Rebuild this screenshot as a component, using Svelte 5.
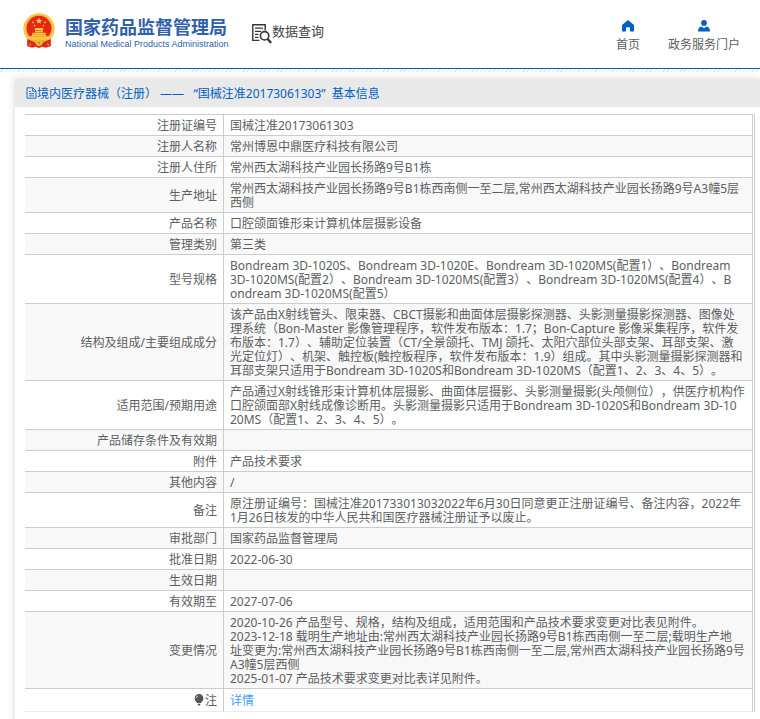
<script>
  const title = '境内医疗器械（注册） —— \u00a0\u00a0“国械注准20173061303” \u00a0基本信息';

  const rows = [
    { label: '注册证编号', lines: ['国械注准20173061303'] },
    { label: '注册人名称', lines: ['常州博恩中鼎医疗科技有限公司'] },
    { label: '注册人住所', lines: ['常州西太湖科技产业园长扬路9号B1栋'] },
    { label: '生产地址', lines: ['常州西太湖科技产业园长扬路9号B1栋西南侧一至二层,常州西太湖科技产业园长扬路9号A3幢5层', '西侧'] },
    { label: '产品名称', lines: ['口腔颌面锥形束计算机体层摄影设备'] },
    { label: '管理类别', lines: ['第三类'] },
    {
      label: '型号规格',
      lines: [
        'Bondream 3D-1020S、Bondream 3D-1020E、Bondream 3D-1020MS(配置1）、Bondream',
        '3D-1020MS(配置2）、Bondream 3D-1020MS(配置3）、Bondream 3D-1020MS(配置4）、B',
        'ondream 3D-1020MS(配置5）'
      ]
    },
    {
      label: '结构及组成/主要组成成分',
      lines: [
        '该产品由X射线管头、限束器、CBCT摄影和曲面体层摄影探测器、头影测量摄影探测器、图像处',
        '理系统（Bon-Master 影像管理程序，软件发布版本：1.7；Bon-Capture 影像采集程序，软件发',
        '布版本：1.7）、辅助定位装置（CT/全景颌托、TMJ 颌托、太阳穴部位头部支架、耳部支架、激',
        '光定位灯）、机架、触控板(触控板程序，软件发布版本：1.9）组成。其中头影测量摄影探测器和',
        '耳部支架只适用于Bondream 3D-1020S和Bondream 3D-1020MS（配置1、2、3、4、5）。'
      ]
    },
    {
      label: '适用范围/预期用途',
      lines: [
        '产品通过X射线锥形束计算机体层摄影、曲面体层摄影、头影测量摄影(头颅侧位），供医疗机构作',
        '口腔颌面部X射线成像诊断用。头影测量摄影只适用于Bondream 3D-1020S和Bondream 3D-10',
        '20MS（配置1、2、3、4、5）。'
      ]
    },
    { label: '产品储存条件及有效期', lines: [''] },
    { label: '附件', lines: ['产品技术要求'] },
    { label: '其他内容', lines: ['/'] },
    {
      label: '备注',
      lines: [
        '原注册证编号：国械注准201733013032022年6月30日同意更正注册证编号、备注内容，2022年',
        '1月26日核发的中华人民共和国医疗器械注册证予以废止。'
      ]
    },
    { label: '审批部门', lines: ['国家药品监督管理局'] },
    { label: '批准日期', lines: ['2022-06-30'] },
    { label: '生效日期', lines: [''] },
    { label: '有效期至', lines: ['2027-07-06'] },
    {
      label: '变更情况',
      lines: [
        '2020-10-26 产品型号、规格，结构及组成，适用范围和产品技术要求变更对比表见附件。',
        '2023-12-18 载明生产地址由:常州西太湖科技产业园长扬路9号B1栋西南侧一至二层;载明生产地',
        '址变更为:常州西太湖科技产业园长扬路9号B1栋西南侧一至二层,常州西太湖科技产业园长扬路9号',
        'A3幢5层西侧',
        '2025-01-07 产品技术要求变更对比表详见附件。'
      ]
    }
  ];
</script>

<header>
  <a class="brand" href="#home">
    <svg class="emblem" viewBox="0 0 32 36" aria-hidden="true">
      <path d="M5 24 L4 33 Q9 35.500 12 33.500 L16 35 L20 33.500 Q23 35.500 28 33 L27 24Z" fill="#dd2a1e" />
      <circle cx="16" cy="15.800" r="15.600" fill="#efb62e" />
      <circle cx="16" cy="15.800" r="14.400" fill="none" stroke="#f7d252" stroke-width="1.200" />
      <circle cx="16" cy="15.200" r="12.400" fill="#e5261b" />
      <path d="M16 4.600l.9 2.100 2.300.2-1.700 1.500.5 2.200-2-1.200-2 1.200.5-2.200-1.700-1.500 2.300-.2z" fill="#f5c83f" />
      <g fill="#f5c83f">
        <circle cx="10" cy="9.400" r=".9" /><circle cx="22" cy="9.400" r=".9" />
        <circle cx="11.600" cy="12.600" r=".9" /><circle cx="20.400" cy="12.600" r=".9" />
        <path d="M12.500 15h7l1.200 2h-9.400zM12 17.600h8v1.600h-8zM9.500 19.800h13l1 3.400h-15z" />
        <path d="M5.400 23.200h21.200l-2 3.800H7.400z" />
      </g>
      <path d="M9.500 21.600h13" stroke="#e08a26" stroke-width=".6" />
      <path d="M4 26 Q10 28 13 30 L12 34 Q8 35 5 33Z M28 26 Q22 28 19 30 L20 34 Q24 35 27 33Z" fill="#dd2a1e" />
      <circle cx="16" cy="29.600" r="3.400" fill="#f0b930" />
      <circle cx="16" cy="29.600" r="1.200" fill="#dd7a22" />
      <path d="M7.500 30l-1 3M24.500 30l1 3" stroke="#f0b930" stroke-width=".8" />
    </svg>
    <span class="names">
      <span class="cn">国家药品监督管理局</span>
      <span class="en">National Medical Products Administration</span>
    </span>
  </a>
  <a class="search" href="#query">
    <svg width="20" height="20" viewBox="0 0 20 20" fill="none" stroke="#35353f" aria-hidden="true">
      <path d="M7.500 16.400H.8V.8h12.400v5.600" stroke-width="1.400" />
      <path d="M3 4.200h8M3 7.400h6M3 10.400h3.500M3 13.400h3.500" stroke-width="1.200" />
      <circle cx="12.600" cy="11.800" r="4.200" stroke-width="1.600" />
      <path d="M15.600 15l3.600 3.800" stroke-width="2.400" />
    </svg>
    <span>数据查询</span>
  </a>
  <nav>
    <a href="#index">
      <svg width="12" height="12" viewBox="0 0 12 12" fill="#0060c4" aria-hidden="true">
        <path d="M6 0L0 5V11.400h4V8q0-.8.8-.8h2.400q.8 0 .8.800v3.400h4V5z" />
      </svg>
      <span>首页</span>
    </a>
    <a href="#portal">
      <svg width="12" height="12" viewBox="0 0 12 12" fill="#0060c4" aria-hidden="true">
        <circle cx="6" cy="2.900" r="2.900" />
        <path d="M0 11.600Q0 7.200 3.600 6.600L6 8.400l2.400-1.800Q12 7.200 12 11.600z" />
      </svg>
      <span>政务服务门户</span>
    </a>
  </nav>
</header>
<div class="hatch"></div>

<main>
  <h1>
    <svg width="11" height="12" viewBox="0 0 11 12" fill="none" stroke="#0060c4" aria-hidden="true">
      <path d="M1 .8h5.800L10 4v7.200H1zM6.600 .8V4.200H10M3 4.500h2M3 6.700h5M3 8.900h5" stroke-width=".9" />
    </svg>
    <span>{title}</span>
  </h1>
  <div class="frame">
    <table>
      <tbody>
        {#each rows as row}
          <tr>
            <th scope="row">{row.label}</th>
            <td>{row.lines.join('\n')}</td>
          </tr>
        {/each}
        <tr class="note">
          <th scope="row">
            <svg width="10" height="12" viewBox="0 0 10 12" aria-hidden="true">
              <path d="M5 0a4.400 4.400 0 0 1 4.400 4.400C9.400 6.600 7.600 7.400 7 9H3C2.400 7.400.6 6.600.6 4.400A4.400 4.400 0 0 1 5 0zM3.500 9.800h3l-.6 1.700H4.100z" fill="#555" />
              <path d="M2.200 4.200Q2.400 2.200 4.200 1.800" fill="none" stroke="#fff" stroke-width=".8" />
            </svg>注</th>
          <td><a href="#detail">详情</a></td>
        </tr>
      </tbody>
    </table>
  </div>
</main>

<style>
  :global(body) {
    margin: 0;
    background: #fff;
    color: #5c5e62;
    font: 12px/14px "Noto Sans", "Noto Sans CJK SC", sans-serif;
    text-spacing-trim: space-all;
    overflow-x: hidden;
  }

  a {
    text-decoration: none;
    color: inherit;
  }

  header {
    display: flex;
    align-items: flex-start;
    height: 69px;
    padding: 0 20px 0 23px;
    border-bottom: 1px solid #0060c4;
    box-sizing: border-box;
  }

  .brand {
    display: flex;
    gap: 10px;
    padding-top: 13px;
    color: #2f5fae;
    white-space: nowrap;
  }

  .emblem {
    width: 32px;
    height: 36px;
  }

  .names {
    display: flex;
    flex-direction: column;
    padding-top: 4px;
    width: 160px;
  }

  .cn {
    font-size: 18px;
    line-height: 20px;
    font-weight: 700;
  }

  .en {
    font: 9px/14px "Liberation Sans", sans-serif;
  }

  .search {
    display: flex;
    padding: 24px 0 0 27px;
    color: #444;
    font-size: 13px;
    line-height: 15px;
    white-space: nowrap;
  }

  nav {
    display: flex;
    gap: 28px;
    margin-left: auto;
    padding-top: 20px;
    white-space: nowrap;
  }

  nav a {
    display: flex;
    flex-direction: column;
    align-items: center;
    gap: 6px;
  }

  .hatch {
    height: 3px;
    background: repeating-linear-gradient(135deg, #fff 0 2px, #e4e4e4 2px 3px);
  }

  main {
    margin: 7px 0 0 15px;
    padding-bottom: 20px;
    background: #fff;
    box-shadow: 0 0 8px rgba(0, 0, 0, 0.16);
  }

  h1 {
    display: flex;
    align-items: center;
    height: 28px;
    margin: 0;
    padding-left: 11px;
    background: #e9e9e9;
    color: #0060c4;
    font-size: 12px;
    line-height: 16px;
    font-weight: 400;
  }

  h1 span {
    padding-top: 1px;
  }

  .frame {
    margin: 7px 5px 0 10px;
    padding-right: 1px;
    border-right: 1px solid #ccc;
  }

  table {
    width: 100%;
    border-collapse: separate;
    border-spacing: 0;
    border-top: 1px solid #ccc;
    border-right: 1px solid #ccc;
  }

  th,
  td {
    padding: 4px 6px 2px;
    border-bottom: 1px solid #ccc;
    vertical-align: middle;
  }

  th {
    width: 186px;
    text-align: right;
    font-weight: 400;
    border-right: 1px solid #ccc;
  }

  td {
    white-space: pre-line;
    word-break: break-all;
    line-break: anywhere;
  }

  tr:nth-child(even) {
    background: #f8f8f8;
  }

  .note,
  .note:nth-child(even) {
    background: #fff;
  }

  .note th,
  .note td {
    padding: 5px 6px 3px;
    border-bottom-color: #ebebeb;
  }

  .note svg {
    vertical-align: -1px;
    margin-right: 1px;
  }

  .note a {
    color: #409eff;
  }
</style>
